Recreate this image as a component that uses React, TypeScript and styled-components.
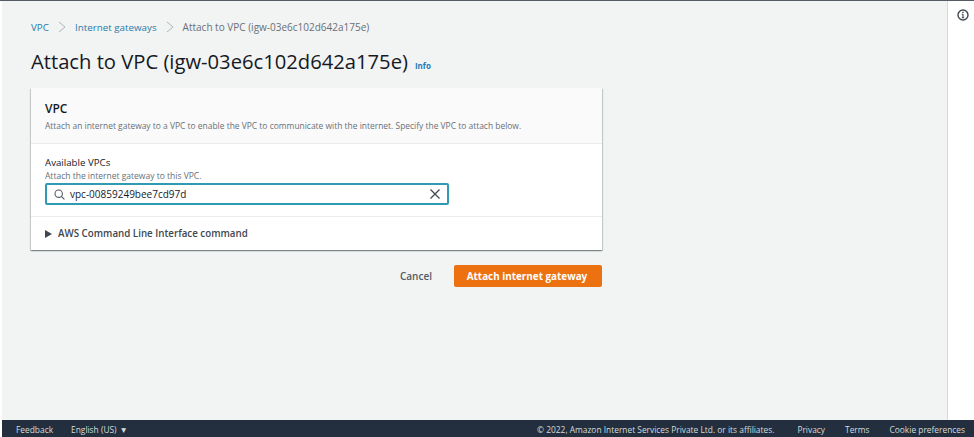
import React from 'react';
import styled, { createGlobalStyle } from 'styled-components';

const GlobalStyle = createGlobalStyle`
  html, body {
    margin: 0;
    padding: 0;
    height: 100%;
    background: #ffffff;
    font-family: 'Open Sans', 'Liberation Sans', sans-serif;
  }
  * { box-sizing: border-box; }
`;

const Page = styled.div`
  width: 974px;
  height: 437px;
  display: flex;
  flex-direction: column;
  overflow: hidden;
  background: #ffffff;
`;

const TopLine = styled.div`
  height: 1px;
  flex: none;
  background: #545b64;
`;

const Body = styled.div`
  flex: 1;
  display: flex;
  min-height: 0;
  padding-left: 2px;
`;

const Main = styled.main`
  width: 946px;
  background: #f2f3f3;
  border-right: 1px solid #d5dbdb;
  padding: 18px 0 0 29px;
`;

const SidePanel = styled.aside`
  flex: 1;
  display: flex;
  justify-content: center;
  padding: 8px 0 0 4px;
`;

const Breadcrumbs = styled.nav`
  display: flex;
  align-items: center;
  height: 16px;
  font-size: 10px;
  color: #687078;
`;

const Crumb = styled.a`
  color: #2a7aa8;
  font-size: 9.8px;
`;

const CrumbArrow = styled.svg`
  width: 10px;
  height: 12px;
  margin: 0 8px;
  fill: none;
  stroke: #aab7b8;
  stroke-width: 1;
`;

const TitleRow = styled.div`
  display: flex;
  align-items: baseline;
  margin-top: 12px;
  height: 28px;
`;

const Title = styled.h1`
  margin: 0;
  font-size: 20.2px;
  line-height: 28px;
  font-weight: 400;
  color: #16191f;
`;

const InfoLink = styled.a`
  margin-left: 7px;
  font-size: 8px;
  font-weight: 700;
  color: #1f7ab8;
`;

const Card = styled.section`
  width: 571px;
  margin-top: 13px;
  background: #ffffff;
  box-shadow: 0 1px 1px 0 rgba(0, 28, 36, 0.3), 1px 1px 1px 0 rgba(0, 28, 36, 0.15), -1px 1px 1px 0 rgba(0, 28, 36, 0.15);
`;

const CardHeader = styled.header`
  height: 56px;
  padding: 13px 14px 0;
  background: #fafafa;
  border-bottom: 1px solid #eaeded;
`;

const CardTitle = styled.h2`
  margin: 0;
  font-size: 12px;
  line-height: 15px;
  font-weight: 600;
  color: #16191f;
`;

const CardDescription = styled.p`
  margin: 4px 0 0;
  font-size: 8.45px;
  line-height: 11px;
  color: #687078;
`;

const Field = styled.div`
  height: 73px;
  padding: 12px 14px 0;
  border-bottom: 1px solid #eaeded;
`;

const FieldLabel = styled.label`
  display: block;
  font-size: 9.7px;
  line-height: 14px;
  color: #16191f;
`;

const FieldHint = styled.div`
  font-size: 8.5px;
  line-height: 11px;
  color: #687078;
`;

const SearchBox = styled.div`
  display: flex;
  align-items: center;
  width: 404px;
  height: 22px;
  margin-top: 2px;
  padding: 0 7px 0 7px;
  border: 2px solid #2f9bb3;
  border-radius: 2px;
  background: #ffffff;
`;

const SearchText = styled.span`
  flex: 1;
  margin-left: 5px;
  font-size: 10px;
  color: #16191f;
`;

const Expander = styled.div`
  display: flex;
  align-items: center;
  height: 33px;
  padding: 0 14px;
  font-size: 9.77px;
  font-weight: 600;
  color: #414750;
`;

const Caret = styled.svg`
  width: 7px;
  height: 8px;
  margin-right: 6px;
  fill: #414750;
`;

const Actions = styled.div`
  display: flex;
  align-items: center;
  justify-content: flex-end;
  width: 571px;
  margin-top: 15px;
`;

const CancelButton = styled.button`
  border: none;
  background: none;
  padding: 0;
  margin-right: 22px;
  font: inherit;
  font-size: 10px;
  font-weight: 600;
  color: #545b64;
`;

const PrimaryButton = styled.button`
  width: 148px;
  height: 22px;
  border: none;
  border-radius: 2px;
  padding: 0 2px 0 0;
  background: #ec7211;
  font: inherit;
  font-size: 9.9px;
  font-weight: 700;
  color: #ffffff;
`;

const Footer = styled.footer`
  height: 17px;
  flex: none;
  margin-left: 2px;
  padding: 2px 9px 0 14px;
  display: flex;
  align-items: center;
  justify-content: space-between;
  background: #232f3e;
  color: #d5dbdb;
  font-size: 8.4px;
`;

const FooterGroup = styled.div<{ $gap: number }>`
  display: flex;
  align-items: center;
  gap: ${(props) => props.$gap}px;
`;

const Copyright = styled.span`
  margin-right: 3px;
`;

const LanguageCaret = styled.span`
  margin-left: 3px;
`;

export default function App() {
  return (
    <>
      <GlobalStyle />
      <Page>
        <TopLine />
        <Body>
          <Main>
            <Breadcrumbs>
              <Crumb>VPC</Crumb>
              <CrumbArrow viewBox="0 0 10 12"><path d="M2 1l6 5-6 5" /></CrumbArrow>
              <Crumb>Internet gateways</Crumb>
              <CrumbArrow viewBox="0 0 10 12"><path d="M2 1l6 5-6 5" /></CrumbArrow>
              <span>Attach to VPC (igw-03e6c102d642a175e)</span>
            </Breadcrumbs>
            <TitleRow>
              <Title>Attach to VPC (igw-03e6c102d642a175e)</Title>
              <InfoLink>Info</InfoLink>
            </TitleRow>
            <Card>
              <CardHeader>
                <CardTitle>VPC</CardTitle>
                <CardDescription>
                  Attach an internet gateway to a VPC to enable the VPC to communicate with the internet. Specify the VPC to attach below.
                </CardDescription>
              </CardHeader>
              <Field>
                <FieldLabel>Available VPCs</FieldLabel>
                <FieldHint>Attach the internet gateway to this VPC.</FieldHint>
                <SearchBox>
                  <svg width="11" height="11" viewBox="0 0 11 11" fill="none" stroke="#545b64" strokeWidth="1.1">
                    <circle cx="4.7" cy="4.7" r="3.7" />
                    <path d="M7.4 7.4l3 3" />
                  </svg>
                  <SearchText>vpc-00859249bee7cd97d</SearchText>
                  <svg width="10" height="10" viewBox="0 0 10 10" fill="none" stroke="#414750" strokeWidth="1.3">
                    <path d="M.5.5l9 9M9.500.5l-9 9" />
                  </svg>
                </SearchBox>
              </Field>
              <Expander>
                <Caret viewBox="0 0 7 8"><path d="M0 0l7 4-7 4z" /></Caret>
                AWS Command Line Interface command
              </Expander>
            </Card>
            <Actions>
              <CancelButton>Cancel</CancelButton>
              <PrimaryButton>Attach internet gateway</PrimaryButton>
            </Actions>
          </Main>
          <SidePanel>
            <svg width="12" height="12" viewBox="0 0 12 12" fill="none" stroke="#414750">
              <circle cx="6" cy="6" r="5" strokeWidth="1.4" />
              <path d="M6 5.200v3.600M4.800 8.800h2.400M4.800 5.200H6" strokeWidth="1.1" />
              <path d="M6 2.800v1.200" strokeWidth="1.4" />
            </svg>
          </SidePanel>
        </Body>
        <Footer>
          <FooterGroup $gap={18}>
            <span>Feedback</span>
            <span>English (US)<LanguageCaret>▼</LanguageCaret></span>
          </FooterGroup>
          <FooterGroup $gap={20}>
            <Copyright>© 2022, Amazon Internet Services Private Ltd. or its affiliates.</Copyright>
            <span>Privacy</span>
            <span>Terms</span>
            <span>Cookie preferences</span>
          </FooterGroup>
        </Footer>
      </Page>
    </>
  );
}
